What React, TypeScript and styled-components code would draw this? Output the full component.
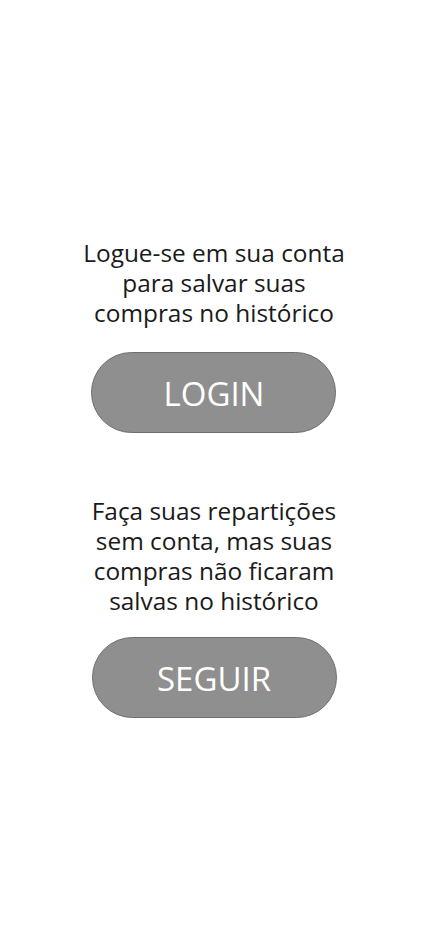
import styled, { createGlobalStyle } from "styled-components";

const GlobalStyle = createGlobalStyle`
  body {
    margin: 0;
    background: #ffffff;
    font-family: "Open Sans", "Noto Sans", sans-serif;
  }
`;

const Page = styled.div`
  width: 428px;
  min-height: 926px;
  display: flex;
  flex-direction: column;
  align-items: center;
  gap: 63px;
  padding-top: 238px;
  box-sizing: border-box;
`;

const Section = styled.div<{ spacing: number }>`
  display: flex;
  flex-direction: column;
  align-items: center;
  gap: ${(props) => props.spacing}px;
`;

const Message = styled.p`
  margin: 0;
  font-size: 24.4px;
  line-height: 30px;
  color: #1a1a1a;
  text-align: center;
`;

const Btn = styled.button`
  width: 245px;
  height: 81px;
  border-radius: 41px;
  border: 1px solid #6e6e6e;
  background-color: #8f8f8f;
  color: #ffffff;
  font-family: "Open Sans", "Noto Sans", sans-serif;
  font-size: 33px;
  padding: 2px 0 0;
  cursor: pointer;
`;

const App = () => {
  return (
    <Page>
      <GlobalStyle />
      <Section spacing={24}>
        <Message>
          Logue-se em sua conta
          <br />
          para salvar suas
          <br />
          compras no histórico
        </Message>
        <Btn>LOGIN</Btn>
      </Section>
      <Section spacing={21}>
        <Message>
          Faça suas repartições
          <br />
          sem conta, mas suas
          <br />
          compras não ficaram
          <br />
          salvas no histórico
        </Message>
        <Btn>SEGUIR</Btn>
      </Section>
    </Page>
  );
};

export default App;
